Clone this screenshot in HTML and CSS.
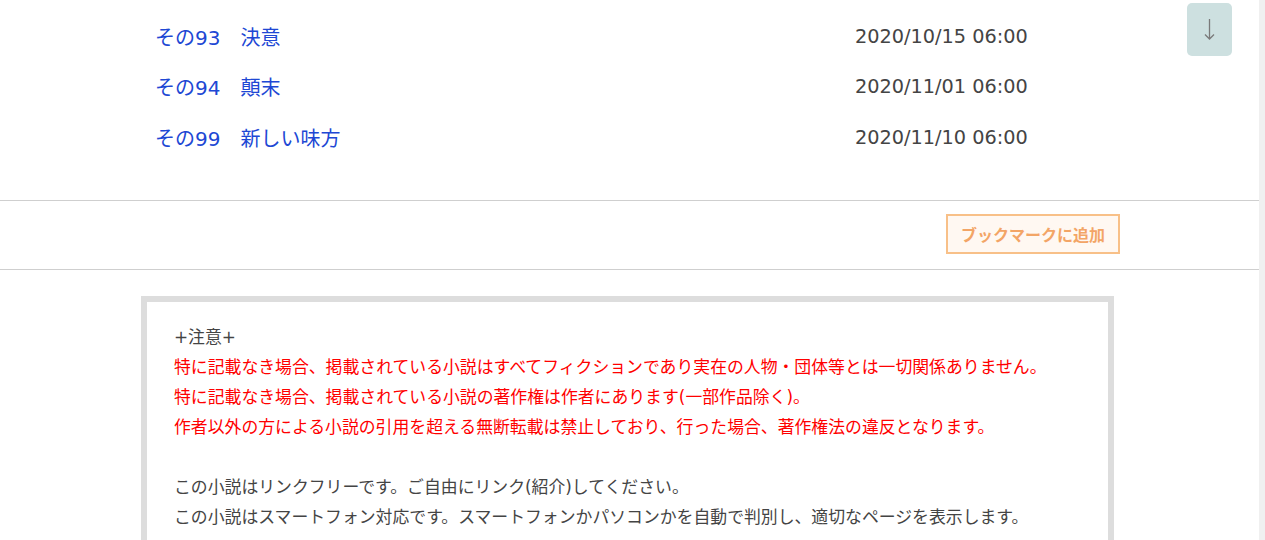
FILE: index.html
```html
<!DOCTYPE html>
<html lang="ja">
<head>
<meta charset="utf-8">
<title>目次</title>
<link rel="stylesheet" href="styles.css">
</head>
<body>
<div class="page">
  <div class="index">
    <div class="row"><a class="title" href="#">その93　決意</a><span class="date">2020/10/15 06:00</span></div>
    <div class="row"><a class="title" href="#">その94　顛末</a><span class="date">2020/11/01 06:00</span></div>
    <div class="row"><a class="title" href="#">その99　新しい味方</a><span class="date">2020/11/10 06:00</span></div>
  </div>
  <div class="bookmark-bar">
    <a class="bookmark" href="#">ブックマークに追加</a>
  </div>
  <div class="notice">
    <p class="gray">+注意+</p>
    <p class="red">特に記載なき場合、掲載されている小説はすべてフィクションであり実在の人物・団体等とは一切関係ありません。</p>
    <p class="red">特に記載なき場合、掲載されている小説の著作権は作者にあります(一部作品除く)。</p>
    <p class="red">作者以外の方による小説の引用を超える無断転載は禁止しており、行った場合、著作権法の違反となります。</p>
    <p class="gray blank">&nbsp;</p>
    <p class="gray">この小説はリンクフリーです。ご自由にリンク(紹介)してください。</p>
    <p class="gray">この小説はスマートフォン対応です。スマートフォンかパソコンかを自動で判別し、適切なページを表示します。</p>
  </div>
</div>
<a class="to-bottom" href="#" aria-label="下へ"><svg width="45" height="53" viewBox="0 0 45 53"><path d="M22.5 16 V36 M18 31.5 L22.5 36 L27 31.5" fill="none" stroke="#7a7a7a" stroke-width="1.3"/></svg></a>
<div class="scrollbar"></div>
</body>
</html>
```
FILE: styles.css
```css
html, body {
  margin: 0;
  padding: 0;
  background: #fff;
}
body {
  font-family: "DejaVu Sans", "Noto Sans CJK JP", sans-serif;
  color: #444;
  overflow: hidden;
}
.page {
  margin-right: 6px;
}
.index {
  padding: 11px 0 37px 155px;
}
.row {
  display: flex;
  height: 50.5px;
  align-items: center;
}
.title {
  width: 700px;
  font-size: 20px;
  color: #2047d4;
  text-decoration: none;
}
.date {
  font-size: 19.3px;
  color: #444;
}
.bookmark-bar {
  border-top: 1px solid #cfcfcf;
  border-bottom: 1px solid #cfcfcf;
  display: flex;
  justify-content: flex-end;
  padding: 13px 139px 15px 0;
}
.bookmark {
  display: flex;
  align-items: center;
  justify-content: center;
  width: 174px;
  height: 40px;
  box-sizing: border-box;
  border: 2px solid #f8c088;
  background: #fff8f2;
  color: #f3a566;
  font-family: "Noto Sans CJK JP", sans-serif;
  font-weight: bold;
  font-size: 16px;
  text-decoration: none;
}
.notice {
  margin: 26px 0 0 141px;
  width: 973px;
  box-sizing: border-box;
  border: 6px solid #dddddd;
  padding: 20px 20px 20px 27px;
  font-size: 16.85px;
  line-height: 30px;
}
.notice p {
  margin: 0;
}
.red {
  color: #ff0000;
}
.gray {
  color: #444;
}
.to-bottom {
  position: fixed;
  top: 3px;
  left: 1187px;
  width: 45px;
  height: 53px;
  border-radius: 5px;
  background: #cde0e0;
  display: block;
  text-decoration: none;
}
.to-bottom svg {
  display: block;
}
.scrollbar {
  position: fixed;
  top: 0;
  right: 0;
  width: 6px;
  height: 100%;
  background: #f0f0f0;
}
```
